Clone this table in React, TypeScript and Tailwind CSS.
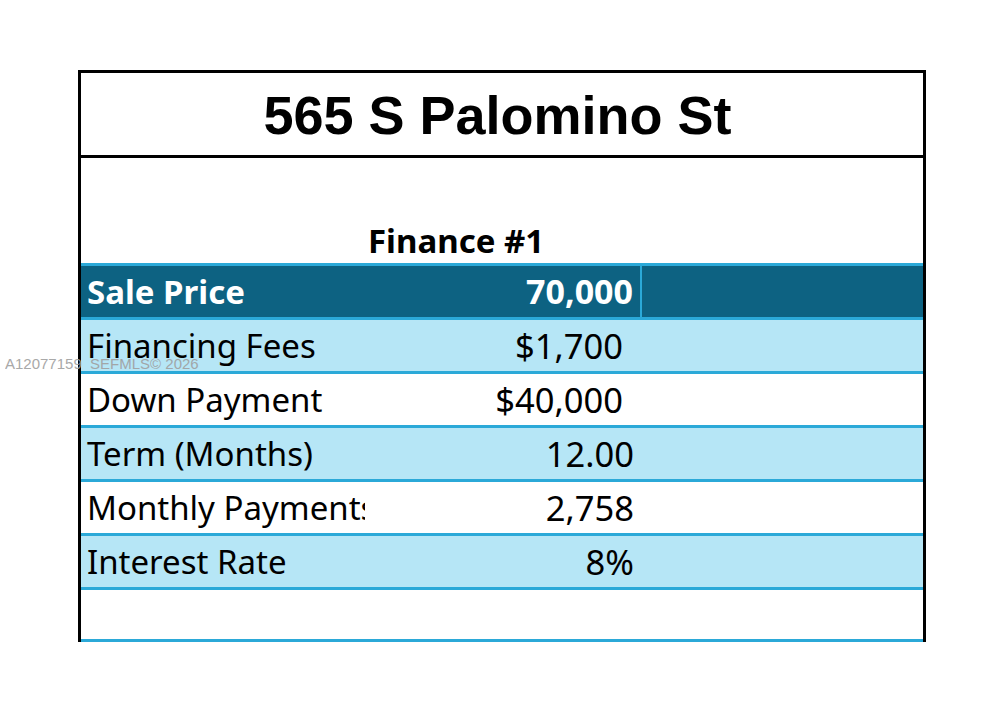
const rows = [
  { label: "Financing Fees", value: "$1,700", tint: true, money: true },
  { label: "Down Payment", value: "$40,000", tint: false, money: true },
  { label: "Term (Months)", value: "12.00", tint: true, money: false },
  { label: "Monthly Payments", value: "2,758", tint: false, money: false },
  { label: "Interest Rate", value: "8%", tint: true, money: false },
  { label: "", value: "", tint: false, money: false },
];

const cellFont = { fontFamily: '"Noto Sans", "Open Sans", sans-serif' };

export default function App() {
  return (
    <div className="relative w-[1000px] h-[728px] bg-white overflow-hidden">
      <div className="ml-[78px] pt-[70px] w-[848px]">
        <div className="border-x-[3px] border-t-[3px] border-black">
          {/* Title */}
          <div className="h-[85px] border-b-[3px] border-black flex items-center justify-center pr-[9px]">
            <h1
              className="text-[54px] font-bold text-black leading-none pt-[2px]"
              style={{ fontFamily: '"Liberation Sans", Arial, sans-serif' }}
            >
              565 S Palomino St
            </h1>
          </div>

          {/* Spacer + heading */}
          <div className="h-[105px] grid grid-cols-[284px_277px_1fr]" style={cellFont}>
            <div />
            <div className="flex items-end pl-[3px] pb-[6px]">
              <span className="text-[33px] font-bold text-black leading-none">Finance #1</span>
            </div>
            <div />
          </div>

          {/* Sale price */}
          <div className="border-t-[3px] border-[#2ba9d8] bg-[#0d6282] h-[54px] grid grid-cols-[284px_277px_1fr]" style={cellFont}>
            <div className="flex items-center pl-[6px] text-white font-bold text-[33px] whitespace-nowrap">Sale Price</div>
            <div className="flex items-center justify-end pr-[7px] text-white font-bold text-[34px] border-r-2 border-[#2ba9d8]">70,000</div>
            <div />
          </div>

          {rows.map((r, i) => (
            <div
              key={i}
              className={`border-t-[3px] border-[#2ba9d8] grid grid-cols-[284px_277px_1fr] ${r.tint ? "bg-[#b6e6f6]" : "bg-white"} ${i === rows.length - 1 ? "h-[55px] border-b-[3px]" : "h-[54px]"}`}
              style={cellFont}
            >
              <div className="flex items-center pl-[6px] text-[33px] text-black whitespace-nowrap overflow-hidden">{r.label}</div>
              <div className={`flex items-center justify-end text-[34.5px] text-black ${r.money ? "pr-[19px]" : "pr-[8px]"}`}>{r.value}</div>
              <div />
            </div>
          ))}
        </div>
      </div>

      {/* watermark */}
      <div
        className="absolute left-[5px] top-[353px] text-[15px] text-[#a0a0a0] whitespace-nowrap opacity-90"
        style={{ fontFamily: '"Liberation Sans", Arial, sans-serif' }}
      >
        A12077159&nbsp;&nbsp;SEFMLS© 2026
      </div>
    </div>
  );
}
